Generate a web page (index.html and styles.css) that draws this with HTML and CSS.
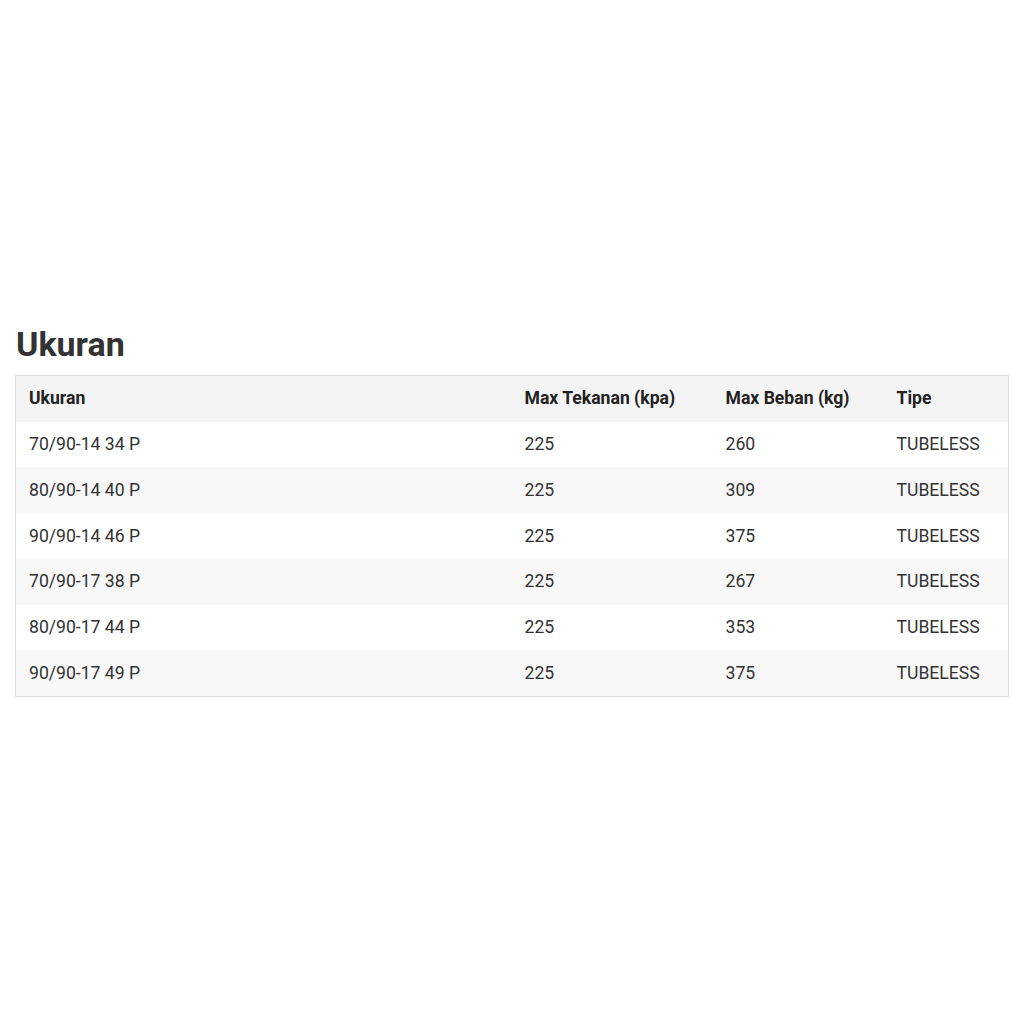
FILE: index.html
```html
<!DOCTYPE html>
<html>
<head>
<meta charset="utf-8">
<link rel="stylesheet" href="styles.css">
</head>
<body>
<section class="spec">
  <h2 class="spec-title">Ukuran</h2>
  <table class="spec-table">
    <colgroup>
      <col class="c1"><col class="c2"><col class="c3"><col class="c4">
    </colgroup>
    <thead>
      <tr><th>Ukuran</th><th>Max Tekanan (kpa)</th><th>Max Beban (kg)</th><th>Tipe</th></tr>
    </thead>
    <tbody>
      <tr><td>70/90-14 34 P</td><td>225</td><td>260</td><td>TUBELESS</td></tr>
      <tr><td>80/90-14 40 P</td><td>225</td><td>309</td><td>TUBELESS</td></tr>
      <tr><td>90/90-14 46 P</td><td>225</td><td>375</td><td>TUBELESS</td></tr>
      <tr><td>70/90-17 38 P</td><td>225</td><td>267</td><td>TUBELESS</td></tr>
      <tr><td>80/90-17 44 P</td><td>225</td><td>353</td><td>TUBELESS</td></tr>
      <tr><td>90/90-17 49 P</td><td>225</td><td>375</td><td>TUBELESS</td></tr>
    </tbody>
  </table>
</section>
</body>
</html>
```
FILE: styles.css
```css
html, body {
  margin: 0;
  padding: 0;
  background: #fff;
}
body {
  font-family: Roboto, "Liberation Sans", sans-serif;
  color: #333;
}
.spec {
  padding: 324px 16px 0 15px;
}
.spec-title {
  margin: 0 0 11px 1px;
  font-size: 34px;
  line-height: 40px;
  font-weight: 700;
  color: #333;
}
.spec-table {
  width: 994px;
  border-collapse: collapse;
  border: 1px solid #dcdcdc;
  font-size: 17.6px;
}
.c1 { width: 496px; }
.c2 { width: 201px; }
.c3 { width: 171px; }
.c4 { width: 125px; }
.spec-table th,
.spec-table td {
  text-align: left;
  padding: 12px 13px;
  line-height: 21.7px;
  vertical-align: middle;
}
.spec-table td {
  padding-top: 12.5px;
  padding-bottom: 11.5px;
}
.spec-table th {
  font-weight: 700;
  color: #222;
  background: #f4f4f4;
}
.spec-table tbody tr:nth-child(odd) td { background: #fff; }
.spec-table tbody tr:nth-child(even) td { background: #f8f8f8; }
```
